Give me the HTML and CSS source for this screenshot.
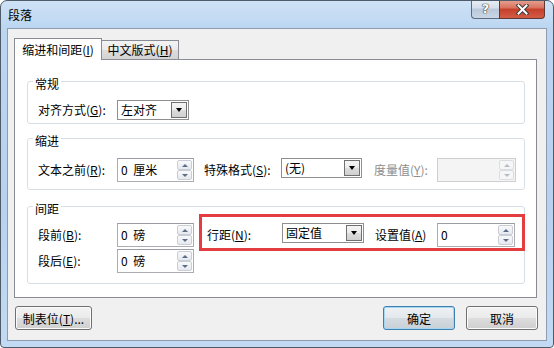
FILE: index.html
```html
<!DOCTYPE html>
<html lang="zh-CN">
<head>
    <meta charset="UTF-8">
    <title>段落</title>
    <link rel="stylesheet" href="styles.css">
</head>
<body>

<div class="window">
    <div class="titlebar">
        <span class="title">段落</span>
        <div class="caption">
            <div class="cap-help">?</div>
            <div class="cap-close">
                <svg width="13" height="11" viewBox="0 0 13 11">
                    <path d="M2.5 1.5 L10.5 9.5 M10.5 1.5 L2.5 9.5" stroke="#3b3b3b" stroke-width="4" stroke-linecap="square"/>
                    <path d="M2.5 1.5 L10.5 9.5 M10.5 1.5 L2.5 9.5" stroke="#fff" stroke-width="2" stroke-linecap="square"/>
                </svg>
            </div>
        </div>
    </div>

    <div class="client">
        <div class="tabs">
            <div class="tab active">缩进和间距(<u>I</u>)</div>
            <div class="tab">中文版式(<u>H</u>)</div>
        </div>

        <div class="panel">
            <fieldset class="group group-general">
                <legend>常规</legend>
                <div class="row row-short">
                    <span class="lbl w79">对齐方式(<u>G</u>):</span>
                    <div class="combo w72">
                        <span class="combo-text">左对齐</span>
                        <span class="combo-btn"><i class="tri"></i></span>
                    </div>
                </div>
            </fieldset>

            <fieldset class="group group-indent">
                <legend>缩进</legend>
                <div class="row">
                    <span class="lbl w79">文本之前(<u>R</u>):</span>
                    <div class="spin w77">
                        <span class="spin-text">0 厘米</span>
                        <span class="spin-btns"><span class="spin-up"><i></i></span><span class="spin-down"><i></i></span></span>
                    </div>
                    <span class="lbl w77 ml10">特殊格式(<u>S</u>):</span>
                    <div class="combo w81">
                        <span class="combo-text">(无)</span>
                        <span class="combo-btn"><i class="tri"></i></span>
                    </div>
                    <span class="lbl w63 ml12 disabled">度量值(<u>Y</u>):</span>
                    <div class="spin w79 spin-disabled">
                        <span class="spin-text"></span>
                        <span class="spin-btns"><span class="spin-up"><i></i></span><span class="spin-down"><i></i></span></span>
                    </div>
                </div>
            </fieldset>

            <fieldset class="group group-spacing">
                <legend>间距</legend>
                <div class="row">
                    <span class="lbl w79">段前(<u>B</u>):</span>
                    <div class="spin w77">
                        <span class="spin-text">0 磅</span>
                        <span class="spin-btns"><span class="spin-up"><i></i></span><span class="spin-down"><i></i></span></span>
                    </div>
                    <div class="highlight">
                        <span class="lbl w75">行距(<u>N</u>):</span>
                        <div class="combo w82">
                            <span class="combo-text">固定值</span>
                            <span class="combo-btn"><i class="tri"></i></span>
                        </div>
                        <span class="lbl w62 ml11">设置值(<u>A</u>)</span>
                        <div class="spin w78">
                            <span class="spin-text">0</span>
                            <span class="spin-btns"><span class="spin-up"><i></i></span><span class="spin-down"><i></i></span></span>
                        </div>
                    </div>
                </div>
                <div class="row row-second">
                    <span class="lbl w79">段后(<u>E</u>):</span>
                    <div class="spin w77">
                        <span class="spin-text">0 磅</span>
                        <span class="spin-btns"><span class="spin-up"><i></i></span><span class="spin-down"><i></i></span></span>
                    </div>
                </div>
            </fieldset>
        </div>

        <div class="footer">
            <button class="btn btn-tabs">制表位(<u>T</u>)...</button>
            <span class="spacer"></span>
            <button class="btn btn-ok">确定</button>
            <button class="btn btn-cancel">取消</button>
        </div>
    </div>
</div>

</body>
</html>
```

FILE: styles.css
```css
body {
    margin: 0;
    padding: 0;
    font-family: "Noto Sans CJK SC", "Noto Sans", sans-serif;
    font-size: 12px;
    color: #000;
    background: #fff;
}
u {
    text-decoration: underline;
    text-underline-offset: 1px;
}
.window {
    width: 554px;
    height: 348px;
    box-sizing: border-box;
    border: 1px solid #4e5b69;
    border-radius: 7px 7px 4px 4px;
    background: linear-gradient(to bottom, #cfe2f6 0, #bcd6f1 27px, #b8d2ee 60%, #c2daf3 100%);
    display: flex;
    flex-direction: column;
    overflow: hidden;
}
.titlebar {
    height: 27px;
    display: flex;
    justify-content: space-between;
    align-items: flex-start;
    padding-left: 7px;
    flex-shrink: 0;
}
.title {
    line-height: 27px;
}
.caption {
    display: flex;
    margin-top: -1px;
    margin-right: 8px;
}
.cap-help {
    width: 28px;
    height: 19px;
    box-sizing: border-box;
    border: 1px solid #5d6b7b;
    border-top: none;
    border-right: none;
    border-radius: 0 0 0 4px;
    background: linear-gradient(to bottom, #e8eef5 0, #d5dfea 45%, #b9c8da 50%, #c9d6e5 100%);
    color: #fff;
    font-family: "DejaVu Sans", sans-serif;
    font-size: 13px;
    font-weight: bold;
    line-height: 18px;
    text-align: center;
    text-shadow: 0 0 1px #333, 0 0 1px #333, 0 0 1px #333;
}
.cap-close {
    width: 46px;
    height: 19px;
    box-sizing: border-box;
    border: 1px solid #5e3a34;
    border-top: none;
    border-radius: 0 0 4px 0;
    background: linear-gradient(to bottom, #e6a495 0, #d8705d 45%, #c63f2a 50%, #d35c45 100%);
    display: flex;
    align-items: center;
    justify-content: center;
}
.client {
    flex: 1;
    margin: 0 6px 6px;
    border: 1px solid #8d9cae;
    background: #f0f0f0;
    padding: 9px 9px 0 6px;
    display: flex;
    flex-direction: column;
}
.tabs {
    display: flex;
    align-items: flex-end;
    height: 21px;
    position: relative;
    z-index: 1;
}
.tab {
    width: 78px;
    height: 19px;
    box-sizing: border-box;
    margin-left: -1px;
    border: 1px solid #898c95;
    border-bottom: none;
    text-align: center;
    line-height: 18px;
    background: linear-gradient(to bottom, #f3f3f3 0, #ebebeb 50%, #dddddd 50%, #d3d3d3 100%);
}
.tab.active {
    width: 88px;
    height: 22px;
    margin-left: 0;
    margin-bottom: -1px;
    line-height: 21px;
    background: #fff;
    position: relative;
    z-index: 1;
}
.panel {
    height: 239px;
    box-sizing: border-box;
    border: 1px solid #898c95;
    background: #fff;
    padding: 11px 11px 0 12px;
}
.group {
    margin: 0;
    padding: 0;
    min-width: 0;
    border: 1px solid #d5dfe5;
    border-radius: 3px;
}
.group legend {
    margin-left: 5px;
    padding: 6px 2px 0;
    line-height: 14px;
}
.group-general {
    padding-bottom: 3px;
}
.group-indent {
    margin-top: 4px;
    padding-bottom: 7px;
}
.group-spacing {
    margin-top: 6px;
    padding-bottom: 10px;
}
.row {
    display: flex;
    align-items: flex-start;
    height: 24px;
    padding-left: 10px;
}
.group-general .row {
    margin-top: 9px;
    height: 20px;
}
.group-indent .row {
    margin-top: 10px;
}
.group-spacing .row {
    margin-top: 7px;
}
.group-spacing .row-second {
    margin-top: 2px;
}
.lbl {
    line-height: 24px;
    white-space: nowrap;
    flex-shrink: 0;
}
.row-short .lbl {
    line-height: 20px;
}
.lbl.disabled {
    color: #8d8d8d;
}
.w62 { width: 62px; }
.w63 { width: 63px; }
.w72 { width: 72px; }
.w75 { width: 75px; }
.w77 { width: 77px; }
.w78 { width: 78px; }
.w79 { width: 79px; }
.w81 { width: 81px; }
.w82 { width: 82px; }
.ml10 { margin-left: 10px; }
.ml11 { margin-left: 11px; }
.ml12 { margin-left: 12px; }

.combo {
    display: flex;
    height: 20px;
    box-sizing: border-box;
    border: 1px solid #8f8f8f;
    background: #fff;
    flex-shrink: 0;
}
.combo-text {
    flex: 1;
    padding-left: 3px;
    line-height: 18px;
}
.combo-btn {
    width: 16px;
    margin: 1px;
    box-sizing: border-box;
    border: 1px solid #707070;
    background: linear-gradient(to bottom, #f4f4f4 0, #ebebeb 50%, #dddddd 50%, #d0d0d0 100%);
    display: flex;
    align-items: center;
    justify-content: center;
}
.tri {
    width: 0;
    height: 0;
    border-left: 3.5px solid transparent;
    border-right: 3.5px solid transparent;
    border-top: 4px solid #000;
}

.spin {
    display: flex;
    height: 24px;
    box-sizing: border-box;
    border: 1px solid #abadb3;
    border-top-color: #9a9ca3;
    background: #fff;
    flex-shrink: 0;
}
.spin-text {
    flex: 1;
    padding-left: 3px;
    line-height: 22px;
    word-spacing: 3px;
}
.spin-btns {
    width: 15px;
    margin: 1px 1px 1px 0;
    display: flex;
    flex-direction: column;
}
.spin-up, .spin-down {
    flex: 1;
    box-sizing: border-box;
    border: 1px solid #c9ced6;
    border-radius: 2px;
    background: linear-gradient(to bottom, #f8f9fa 0, #e6e9ee 100%);
    display: flex;
    align-items: center;
    justify-content: center;
}
.spin-up i, .spin-down i {
    width: 0;
    height: 0;
    border-left: 3px solid transparent;
    border-right: 3px solid transparent;
}
.spin-up i {
    border-bottom: 3px solid #5b6d8a;
}
.spin-down i {
    border-top: 3px solid #5b6d8a;
}
.spin-disabled {
    background: #f4f4f4;
    border-color: #cfcfcf;
}
.spin-disabled .spin-up, .spin-disabled .spin-down {
    border-color: #dadde2;
    background: #f6f6f6;
}
.spin-disabled .spin-up i {
    border-bottom-color: #b4bcc8;
}
.spin-disabled .spin-down i {
    border-top-color: #b4bcc8;
}

.highlight {
    display: flex;
    align-items: flex-start;
    border: 3px solid #e33d3f;
    padding: 6px 7px 1px 5px;
    margin: -9px 0 -4px 5px;
}

.footer {
    display: flex;
    margin-top: 8px;
    margin-right: -1px;
}
.spacer {
    flex: 1;
}
.btn {
    height: 24px;
    box-sizing: border-box;
    border: 1px solid #707070;
    border-radius: 3px;
    background: linear-gradient(to bottom, #f2f2f2 0, #ebebeb 48%, #dddddd 52%, #cfcfcf 100%);
    box-shadow: inset 0 0 0 1px #fbfbfb;
    font: inherit;
    color: #000;
    padding: 0;
    width: 72px;
}
.btn-tabs {
    width: 77px;
    margin-left: 1px;
}
.btn-ok {
    border-color: #3c7fb1;
    box-shadow: inset 0 0 0 1px #a6d6f0;
    background: linear-gradient(to bottom, #eef2f5 0, #e3e8ec 48%, #d4dbe1 52%, #c8d1d8 100%);
}
.btn-cancel {
    margin-left: 11px;
}
```
